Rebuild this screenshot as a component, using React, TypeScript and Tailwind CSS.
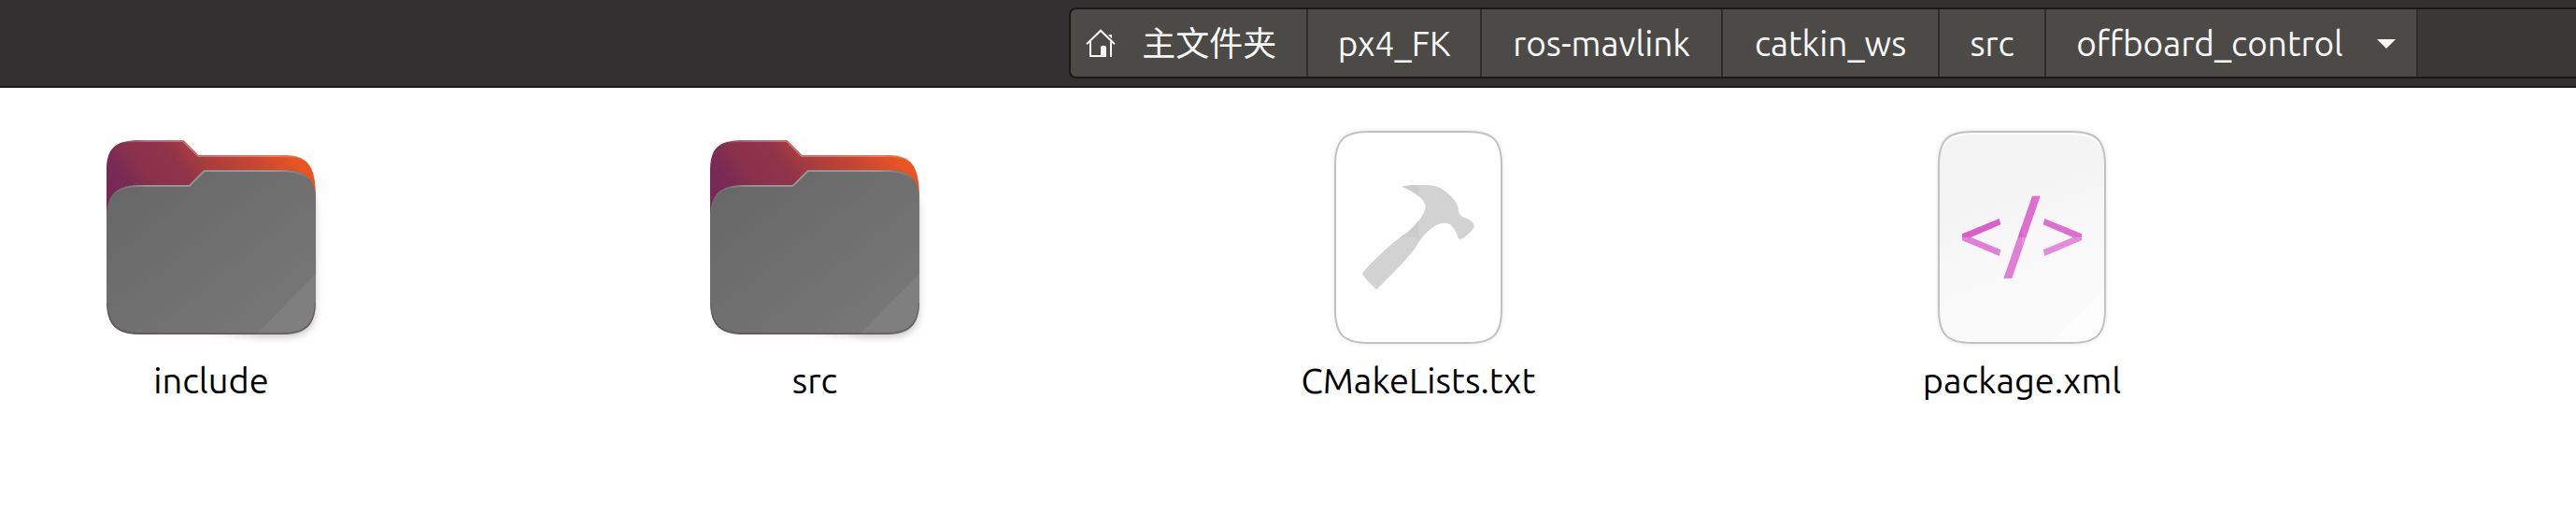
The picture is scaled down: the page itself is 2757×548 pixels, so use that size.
import type { ReactNode } from "react";

function HomeIcon() {
  return (
    <svg className="size-8 shrink-0" viewBox="0 0 96 96" fill="none" aria-hidden="true">
      <path d="M3 49 48 5l45 44" stroke="#f7f7f7" strokeWidth="6" />
      <path d="M15 40v47h40M81 40v50" stroke="#f7f7f7" strokeWidth="6" />
      <path d="M48 90V60q0-7 9-7t9 7v30z" fill="#f7f7f7" />
      <path d="M72 18h12v13z" fill="#f7f7f7" />
    </svg>
  );
}

function FolderIcon() {
  return (
    <svg className="size-64" viewBox="0 0 256 256" aria-hidden="true">
      <defs>
        <linearGradient id="folder-back" gradientUnits="userSpaceOnUse" x1="16" y1="72" x2="169" y2="-38">
          <stop offset="0" stopColor="#762956" />
          <stop offset="0.11" stopColor="#7a2b54" />
          <stop offset="0.22" stopColor="#8a314c" />
          <stop offset="0.4" stopColor="#8f334a" />
          <stop offset="0.5" stopColor="#a53b40" />
          <stop offset="0.78" stopColor="#cb4830" />
          <stop offset="0.95" stopColor="#e95423" />
        </linearGradient>
        <linearGradient id="folder-front" x1="0" y1="0" x2="1" y2="1">
          <stop offset="0" stopColor="#666666" />
          <stop offset="1" stopColor="#797979" />
        </linearGradient>
        <linearGradient id="folder-edge" gradientUnits="userSpaceOnUse" x1="16" y1="0" x2="240" y2="0">
          <stop offset="0" stopColor="#ffffff" stopOpacity="0" />
          <stop offset="0.2" stopColor="#ffffff" stopOpacity="0.28" />
          <stop offset="0.8" stopColor="#ffffff" stopOpacity="0.28" />
          <stop offset="1" stopColor="#ffffff" stopOpacity="0" />
        </linearGradient>
        <filter id="folder-shadow" x="-10%" y="-10%" width="120%" height="120%">
          <feGaussianBlur stdDeviation="4" />
        </filter>
        <clipPath id="folder-front-clip">
          <path d="M16 108C16 82 26 73 50 72H104L120 56H208C230 57 240 66 240 88V196C240 222 230 232 204 232H52C26 232 16 222 16 196Z" />
        </clipPath>
      </defs>
      <path d="M60 60H215Q239 70 239 100V204Q240 234 208 234H180L60 220Z" fill="#000000" fillOpacity="0.25" filter="url(#folder-shadow)" />
      <path d="M16 56C16 32 26 24 52 24H98.500L114.500 40H208C230 41 240 50 240 84V140H16Z" fill="url(#folder-back)" />
      <path d="M28 25.500Q38 25 52 25H98L114 41H208Q220 41 228 45" fill="none" stroke="url(#folder-edge)" strokeWidth="2" />
      <g clipPath="url(#folder-front-clip)">
        <path d="M16 56H240V232H16Z" fill="url(#folder-front)" />
        <path d="M240 167V232H176Z" fill="#ffffff" fillOpacity="0.06" />
        <path d="M17 100C17 83 27 73 50 73H104.500L120.500 57H208Q225 58 232 65" fill="none" stroke="url(#folder-edge)" strokeWidth="2" />
        <path d="M16 198C17 221 27 231 52 231H204C229 231 239 221 240 198" fill="none" stroke="#5a4f4b" strokeOpacity="0.6" strokeWidth="2" />
      </g>
    </svg>
  );
}

const SHEET =
  "M39 51C39 24 48 15 75 15H181C208 15 217 24 217 51V205C217 232 208 241 181 241H75C48 241 39 232 39 205Z";

function Sheet({ id, children }: { id: string; children: ReactNode }) {
  return (
    <svg className="size-64" viewBox="0 0 256 256" aria-hidden="true">
      <defs>
        <filter id={`${id}-shadow`} x="-10%" y="-10%" width="120%" height="120%">
          <feGaussianBlur stdDeviation="3" />
        </filter>
        <clipPath id={`${id}-clip`}>
          <path d={SHEET} />
        </clipPath>
      </defs>
      <path d={SHEET} fill="#000000" fillOpacity="0.12" filter={`url(#${id}-shadow)`} />
      <path d={SHEET} fill="#ffffff" />
      <g clipPath={`url(#${id}-clip)`}>{children}</g>
      <path d={SHEET} fill="none" stroke="#c1c1c1" strokeWidth="2" />
    </svg>
  );
}

function BuildFileIcon() {
  return (
    <Sheet id="build">
      <defs>
        <clipPath id="hammer-clip">
          <path
            transform="translate(-10 -6) scale(.33333)"
            d="M363 240C380 233 450 232 474 239C498 246 539 285 541 303C542 322 548 336 564 340C580 344 592 355 594 367C588 381 568 400 549 410C537 402 538 380 518 362C482 340 436 385 413 421C398 454 320 530 280 570C265 557 243 535 234 519C240 505 330 415 378 387C410 360 437 325 437 303C436 280 400 255 363 240Z"
          />
        </clipPath>
      </defs>
      <g clipPath="url(#hammer-clip)">
        <path d="M38 14H218V242H38Z" fill="#d2d2d2" />
        <path d="M38 14H128V128H38Z" fill="#cccccc" />
      </g>
    </Sheet>
  );
}

function MarkupFileIcon() {
  return (
    <Sheet id="markup">
      <defs>
        <linearGradient id="markup-paper" x1="0" y1="0" x2="0.3" y2="1">
          <stop offset="0" stopColor="#f2f2f2" />
          <stop offset="0.49" stopColor="#f5f5f5" />
          <stop offset="0.6" stopColor="#f8f8f8" />
          <stop offset="1" stopColor="#f9f9f9" />
        </linearGradient>
        <linearGradient id="markup-highlight" x1="0" y1="0" x2="0" y2="1">
          <stop offset="0" stopColor="#ffffff" />
          <stop offset="0.5" stopColor="#ffffff" stopOpacity="0" />
        </linearGradient>
        <clipPath id="tag-clip">
          <path
            transform="translate(-16 -6) scale(.33333)"
            d="M359 342 364 361 268 402 364 442 359 462 240 412V391ZM465 269H491L400 534H373ZM505 342 624 391V412L505 462 500 442 596 402 500 361Z"
          />
        </clipPath>
      </defs>
      <path d="M38 14H218V242H38Z" fill="url(#markup-paper)" />
      <path d="M218 181V242H158Z" fill="#fcfcfc" />
      <path d="M41 50C42 26 51 17 75 17H181C205 17 214 26 215 50" fill="none" stroke="url(#markup-highlight)" strokeWidth="2" />
      <g clipPath="url(#tag-clip)">
        <path d="M38 14H128V128H38Z" fill="#d95fca" />
        <path d="M128 14H218V128H128Z" fill="#dd6fd0" />
        <path d="M38 128H128V242H38Z" fill="#e07fd6" />
        <path d="M128 128H218V242H128Z" fill="#e48bda" />
      </g>
    </Sheet>
  );
}

function Crumb({ layout, children }: { layout: string; children: ReactNode }) {
  return (
    <button
      type="button"
      className={`flex shrink-0 items-center border-r-2 border-[#2d2c2b] bg-[#4b4a47] pt-0.5 ${layout}`}
    >
      {children}
    </button>
  );
}

const files = [
  { name: "include", icon: <FolderIcon /> },
  { name: "src", icon: <FolderIcon /> },
  { name: "CMakeLists.txt", icon: <BuildFileIcon /> },
  { name: "package.xml", icon: <MarkupFileIcon /> },
];

export default function App() {
  return (
    <div className="min-h-screen bg-white font-['Ubuntu','Noto_Sans','Noto_Sans_CJK_SC',sans-serif] text-black">
      <header className="flex border-b-2 border-[#1e1c1e] bg-[#322f31] pt-2 pb-2">
        <div className="w-[41.5%] shrink-0" />
        <nav
          aria-label="路径"
          className="flex h-[76px] grow overflow-hidden rounded-l-lg border-y-2 border-l-2 border-[#1a191a] bg-[#393835] text-[37px] leading-[48px] text-[#f7f7f7]"
        >
          <Crumb layout="min-w-[254px] gap-7 pl-4">
            <HomeIcon />
            <span className="text-[36px]">主文件夹</span>
          </Crumb>
          <Crumb layout="min-w-[186px] justify-center">px4_FK</Crumb>
          <Crumb layout="min-w-[258px] justify-center">ros-mavlink</Crumb>
          <Crumb layout="min-w-[232px] justify-center">catkin_ws</Crumb>
          <Crumb layout="min-w-[114px] justify-center">src</Crumb>
          <Crumb layout="min-w-[398px] justify-between pr-[22px] pl-8">
            offboard_control
            <svg className="h-[10px] w-5" viewBox="0 0 20 10" aria-hidden="true">
              <path d="M0 0H20L10 10Z" fill="#f7f7f7" />
            </svg>
          </Crumb>
        </nav>
      </header>
      <main className="grid grid-cols-[repeat(auto-fill,420px)] gap-x-[226px] pt-8 pl-4">
        {files.map((file) => (
          <button key={file.name} type="button" className="flex flex-col items-center">
            {file.icon}
            <span className="text-[38px] leading-[50px]">{file.name}</span>
          </button>
        ))}
      </main>
    </div>
  );
}
